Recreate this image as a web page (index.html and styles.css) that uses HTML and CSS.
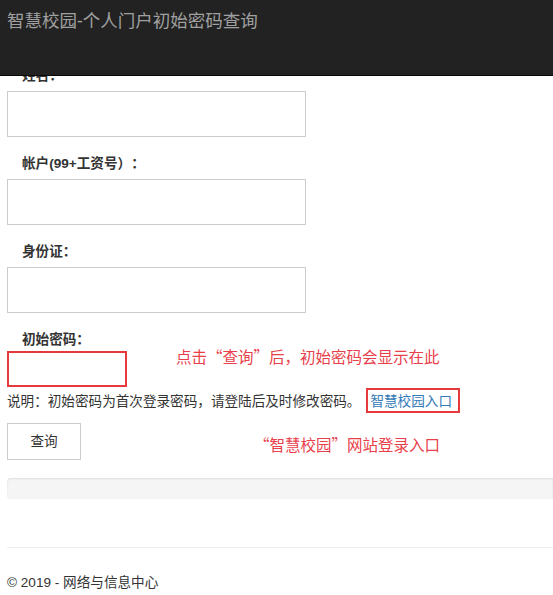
FILE: index.html
```html
<!DOCTYPE html>
<html lang="zh-CN">
<head>
<meta charset="utf-8">
<title>智慧校园-个人门户初始密码查询</title>
<link rel="stylesheet" href="styles.css">
</head>
<body>
<header class="navbar">
  <div class="brand">智慧校园-个人门户初始密码查询</div>
</header>

<main class="main">
  <div class="group">
    <label class="label">姓名：</label>
    <input class="field" type="text">
  </div>
  <div class="group">
    <label class="label">帐户(99+工资号）：</label>
    <input class="field" type="text">
  </div>
  <div class="group">
    <label class="label">身份证：</label>
    <input class="field" type="text">
  </div>
  <div class="group">
    <label class="label">初始密码：</label>
    <div class="result"></div>
  </div>
  <p class="desc"><span>说明：初始密码为首次登录密码，请登陆后及时修改密码。</span><span class="link-box"><a class="link" href="#">智慧校园入口</a></span></p>
  <button class="btn" type="button">查询</button>
  <div class="progress"></div>
  <hr class="rule">
  <footer class="footer">© 2019 - 网络与信息中心</footer>
</main>

<div class="note note-result">点击“查询”后，初始密码会显示在此</div>
<div class="note note-link">“智慧校园”网站登录入口</div>
</body>
</html>
```

FILE: styles.css
```css
html, body {
  margin: 0;
  padding: 0;
}

body {
  position: relative;
  font-family: "Liberation Sans", "Noto Sans CJK SC", sans-serif;
  font-size: 13.6px;
  line-height: 20px;
  color: #333;
  background: #fff;
  overflow: hidden;
  text-spacing-trim: space-all;
}

.navbar {
  position: fixed;
  top: 0;
  left: 0;
  right: 0;
  height: 75px;
  background: #222;
  border-bottom: 1px solid #080808;
  z-index: 10;
}

.brand {
  padding: 0 7px;
  line-height: 42px;
  font-size: 17.5px;
  color: #a0a0a0;
}

.main {
  padding: 49px 0 0 7px;
}

.group {
  margin-top: 17px;
}

.label {
  display: block;
  padding-left: 15px;
  margin-bottom: 5px;
  font-weight: bold;
  line-height: 20px;
}

.field {
  display: block;
  box-sizing: border-box;
  width: 299px;
  height: 46px;
  margin: 0;
  border: 1px solid #ccc;
  background: #fff;
}

.result {
  box-sizing: border-box;
  width: 120px;
  height: 36px;
  margin-top: -4px;
  border: 2px solid #e5393b;
}

.desc {
  display: flex;
  align-items: center;
  height: 20px;
  margin: 3px 0 0;
  font-family: "Noto Sans CJK SC", sans-serif;
  white-space: nowrap;
}

.link-box {
  box-sizing: border-box;
  height: 25px;
  margin-left: 6px;
  padding: 0 6px 0 2px;
  border: 2px solid #e5393b;
  line-height: 21px;
}

.link {
  color: #337ab7;
  text-decoration: none;
}

.btn {
  display: block;
  box-sizing: border-box;
  width: 74px;
  height: 37px;
  margin-top: 13px;
  padding: 0;
  border: 1px solid #ccc;
  background: #fff;
  font: inherit;
  color: #333;
}

.progress {
  height: 21px;
  margin-top: 18px;
  background: #f5f5f5;
  border-radius: 4px 0 0 4px;
  box-shadow: inset 0 1px 2px rgba(0, 0, 0, 0.1);
}

.rule {
  margin: 48px 0 0;
  border: 0;
  border-top: 1px solid #eee;
}

.footer {
  margin-top: 25px;
  line-height: 20px;
}

.note {
  position: absolute;
  color: #e8404a;
  font-family: "Noto Sans CJK SC", sans-serif;
  font-size: 15.5px;
  line-height: 22px;
  white-space: nowrap;
}

.note-result {
  left: 176px;
  top: 345px;
}

.note-link {
  left: 254px;
  top: 433px;
}
```
